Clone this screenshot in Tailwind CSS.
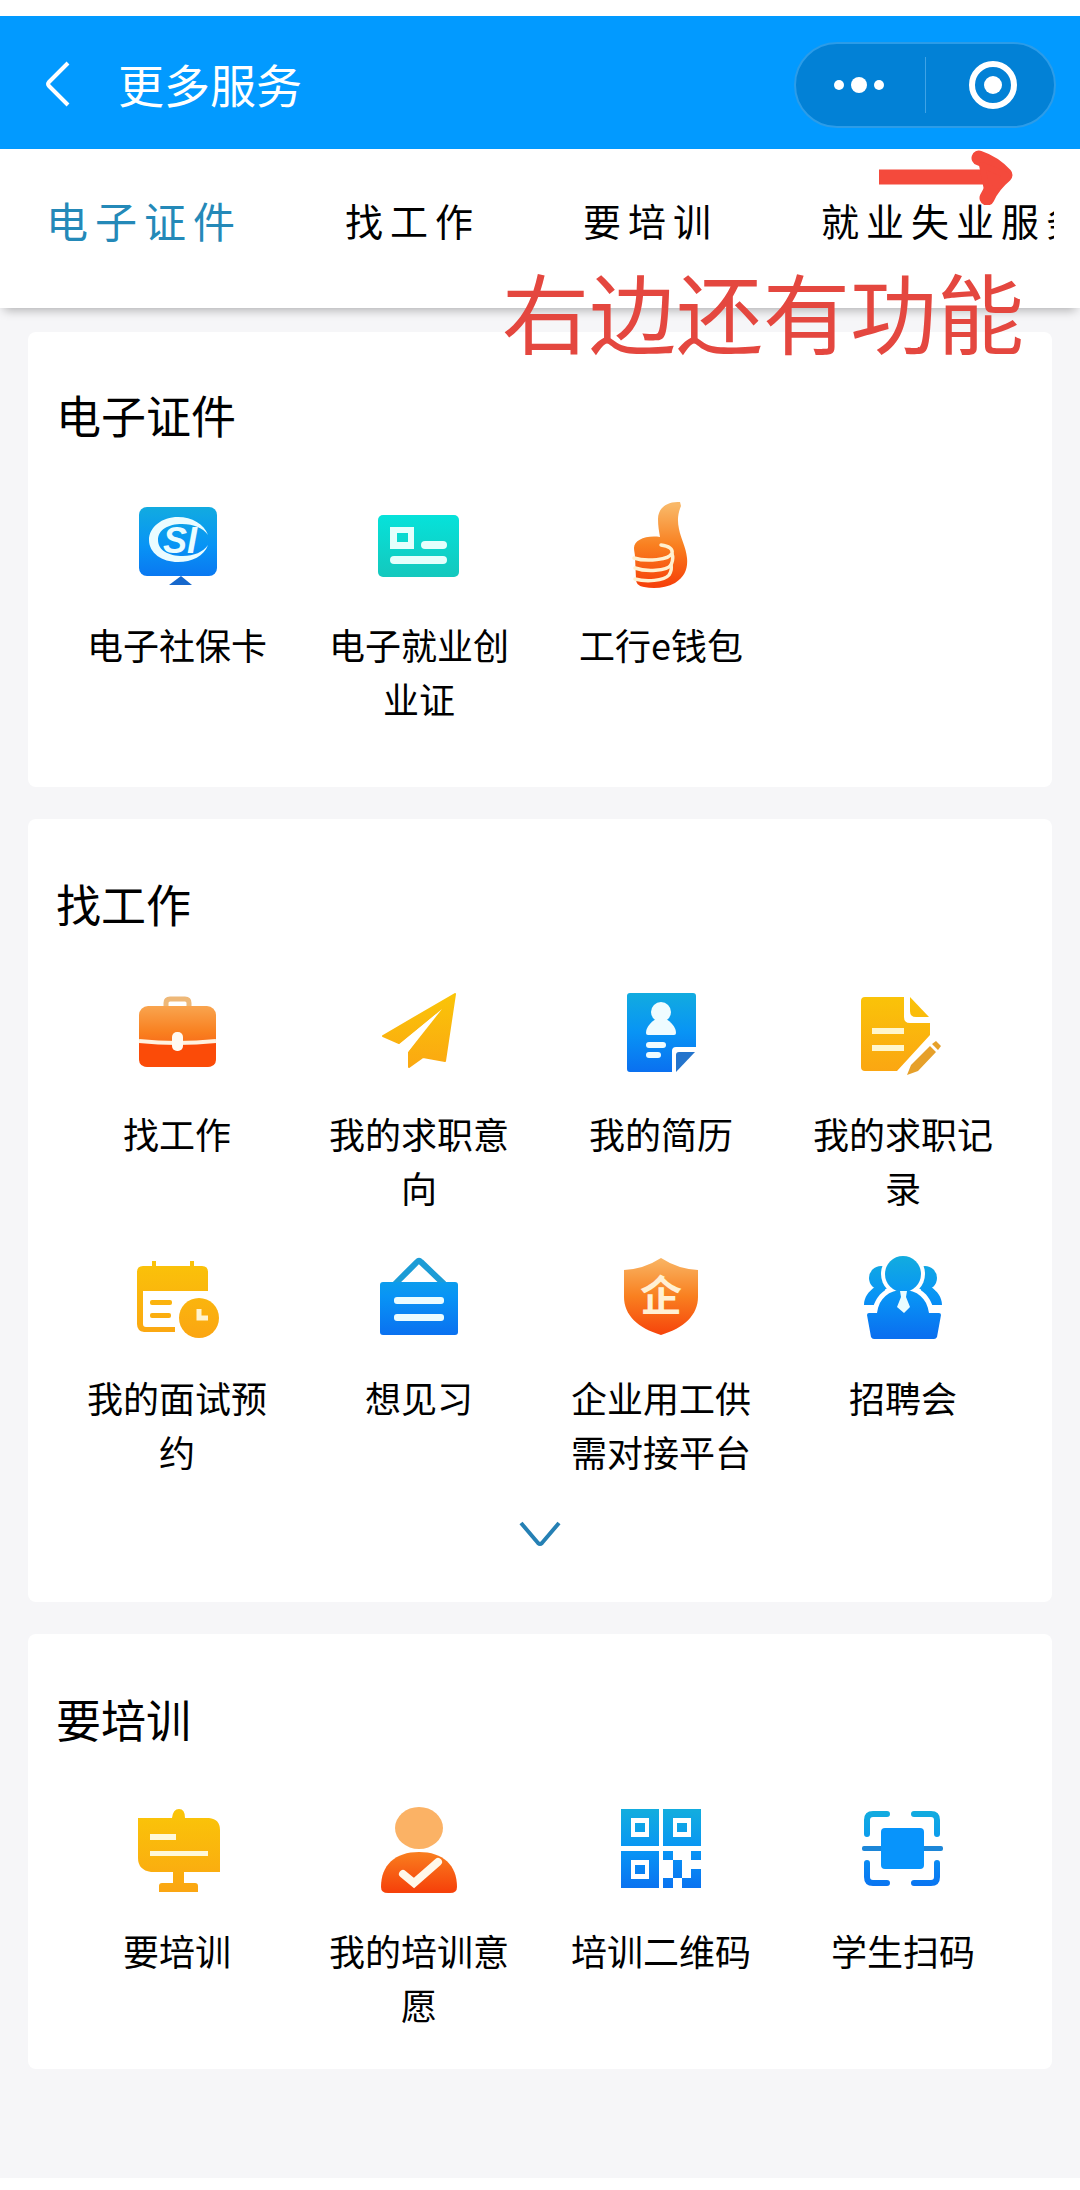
<!DOCTYPE html>
<html lang="zh-CN">
<head>
    <meta charset="UTF-8">
    <meta name="viewport" content="width=device-width, initial-scale=1.0">
    <title>更多服务</title>
    <script src="https://cdn.jsdelivr.net/npm/@tailwindcss/browser@4"></script>
</head>
<body class="bg-white text-black pt-4 font-['Noto_Sans_CJK_SC',sans-serif]">

<!-- Shared icon gradients -->
<svg class="absolute w-0 h-0" aria-hidden="true">
    <defs>
        <linearGradient id="blue" gradientUnits="userSpaceOnUse" x1="0" y1="8" x2="0" y2="88">
            <stop offset="0" stop-color="#12acdf"/><stop offset="0.5" stop-color="#0894f5"/><stop offset="1" stop-color="#0a70f0"/>
        </linearGradient>
        <linearGradient id="orange" gradientUnits="userSpaceOnUse" x1="0" y1="8" x2="0" y2="88">
            <stop offset="0" stop-color="#f9b868"/><stop offset="0.5" stop-color="#f98020"/><stop offset="1" stop-color="#f6420a"/>
        </linearGradient>
        <linearGradient id="yellow" gradientUnits="userSpaceOnUse" x1="0" y1="8" x2="0" y2="88">
            <stop offset="0" stop-color="#fac508"/><stop offset="1" stop-color="#fba612"/>
        </linearGradient>
        <linearGradient id="teal" gradientUnits="userSpaceOnUse" x1="0" y1="18" x2="0" y2="80">
            <stop offset="0" stop-color="#06e2da"/><stop offset="1" stop-color="#14c8bd"/>
        </linearGradient>
    </defs>
</svg>

<!-- Title bar -->
<header class="flex items-center bg-[#029aff] text-white pt-[26px] pb-[21px] pl-10 pr-6">
    <button aria-label="返回" class="w-10 h-14">
        <svg class="w-10 h-14" viewBox="0 0 40 56" fill="none" stroke="currentColor" stroke-width="4"><path d="M28 6 9 25q-2 2 0 4L28 48"/></svg>
    </button>
    <h1 class="ml-[38px] pb-1 text-[46px] leading-[56px]">更多服务</h1>
    <div class="ml-auto flex items-center w-[262px] h-[86px] rounded-full bg-[#0281d6] border-2 border-[#2c9ce8]">
        <button aria-label="更多" class="flex-1 flex justify-center">
            <svg class="w-16 h-10" viewBox="0 0 64 40" fill="currentColor"><circle cx="11" cy="20" r="5"/><circle cx="31" cy="20" r="8"/><circle cx="51" cy="20" r="5"/></svg>
        </button>
        <span class="w-px h-14 bg-[#3fa3e6]"></span>
        <button aria-label="关闭" class="flex-1 flex justify-center">
            <svg class="w-14 h-14" viewBox="0 0 56 56" fill="none"><circle cx="31" cy="28" r="21" stroke="currentColor" stroke-width="6"/><circle cx="31" cy="28" r="9" fill="currentColor"/></svg>
        </button>
    </div>
</header>

<!-- Category tabs -->
<div class="relative z-10 bg-white shadow-[0_6px_10px_-4px_rgba(0,0,0,0.3)]">
    <nav class="flex items-center gap-[103px] h-[159px] pb-[18px] ml-[46px] mr-[26px] overflow-hidden whitespace-nowrap text-[38px] tracking-[7px]">
        <button class="shrink-0 text-[42px] text-[#2489b8]">电子证件</button>
        <button class="shrink-0">找工作</button>
        <button class="shrink-0">要培训</button>
        <button class="shrink-0">就业失业服务</button>
    </nav>

    <!-- Hint: more tabs to the right -->
    <svg class="absolute right-16 top-0 w-[140px] h-14" viewBox="0 0 140 56" fill="none" stroke="#f44a3c" stroke-width="15" stroke-linejoin="round" aria-hidden="true">
        <path d="M3 28H125"/>
        <path d="M103 9Q118 14 129 26Q117 36 111 49" stroke-linecap="round"/>
        <path d="M106 16 130 26 112 46Z" fill="#f44a3c" stroke-width="6"/>
    </svg>
    <p class="absolute right-[56px] top-[117px] text-[87px] leading-[88px] whitespace-nowrap text-[#e4473f]">右边还有功能</p>
</div>

<main class="flex flex-col gap-8 bg-[#f6f6f8] px-7 pt-6 pb-[109px]">

    <!-- 电子证件 -->
    <section class="bg-white rounded-lg px-7 pt-[50px] pb-[62px]">
        <h2 class="text-[45px] leading-[66px]">电子证件</h2>
        <div class="grid grid-cols-4 mt-[49px] text-center text-[36px] leading-[54px]">
            <a href="#" class="flex flex-col items-center gap-6 px-6">
                <svg class="size-24" viewBox="0 0 96 96">
                    <rect x="10" y="10" width="78" height="69" rx="8" fill="url(#blue)"/>
                    <path d="M40 88h23L52 79z" fill="#1668cc"/>
                    <path d="M79 38C75 27 63 20 49 20 33 20 20 30 20 43s13 22 29 22c14 0 26-6 30-17-5 7-14 11-25 11-15 0-25-6-25-16s10-16 24-16c12 0 21 4 26 11z" fill="#eafcff"/>
                    <text x="34" y="56" font-family="Liberation Sans" font-size="36" font-weight="bold" font-style="italic" fill="#eafcff">SI</text>
                </svg>
                <span>电子社保卡</span>
            </a>
            <a href="#" class="flex flex-col items-center gap-6 px-6">
                <svg class="size-24" viewBox="0 0 96 96">
                    <rect x="7" y="18" width="81" height="62" rx="5" fill="url(#teal)"/>
                    <g fill="#e4fffc">
                        <path fill-rule="evenodd" d="M19 30h24v22H19zM26 36v9h11v-9z"/>
                        <rect x="50" y="44" width="26" height="8" rx="4"/>
                        <rect x="19" y="59" width="57" height="8" rx="4"/>
                    </g>
                </svg>
                <span>电子就业创业证</span>
            </a>
            <a href="#" class="flex flex-col items-center gap-6 px-6">
                <svg class="size-24" viewBox="0 0 96 96">
                    <path d="M67 5C54 4 45 11 45 22c0 7 1 12 2 18C33 38 21 43 21 51c0 3 1 6 1 9l1 22c0 4 2 7 8 8 10 2 22 1 31-4 10-6 13-15 12-25-1-11-6-19-8-29-2-9-1-16 2-23z" fill="url(#orange)"/>
                    <g fill="none" stroke="#fff0d0" stroke-width="3.500" stroke-linecap="round">
                        <path d="M48 48c8 1 12 4 11 8-2 7-26 9-38 5"/>
                        <path d="M59 57c2 5 0 8-1 11-4 6-25 7-36 3"/>
                        <path d="M58 68c1 4 0 7-2 10-5 6-23 7-34 4"/>
                    </g>
                </svg>
                <span>工行e钱包</span>
            </a>
        </div>
    </section>

    <!-- 找工作 -->
    <section class="bg-white rounded-lg px-7 pt-[52px] pb-7">
        <h2 class="text-[45px] leading-[66px]">找工作</h2>
        <div class="grid grid-cols-4 gap-y-[34px] mt-[47px] text-center text-[36px] leading-[54px]">
            <a href="#" class="flex flex-col items-center gap-[26px] px-6">
                <svg class="size-24" viewBox="0 0 96 96">
                    <path d="M37 23v-4q0-4 4-4h15q4 0 4 4v4" fill="none" stroke="#eeb878" stroke-width="5"/>
                    <rect x="10" y="22" width="77" height="61" rx="9" fill="url(#orange)"/>
                    <path d="M10 57q38 4 77 0v18q0 8-9 8H19q-9 0-9-8z" fill="#fb4b08"/>
                    <path d="M10 57q38 4 77 0" fill="none" stroke="#fff2e0" stroke-width="4"/>
                    <rect x="43" y="48" width="11" height="19" rx="5" fill="#fffaf2"/>
                </svg>
                <span>找工作</span>
            </a>
            <a href="#" class="flex flex-col items-center gap-[26px] px-6">
                <svg class="size-24" viewBox="0 0 96 96" fill="url(#yellow)" stroke="url(#yellow)" stroke-width="2" stroke-linejoin="round">
                    <path d="M84 10 12 52 28 59 71 24 38 68V83L52 73 74 77Z"/>
                    <path d="M71 25 29 60 37 68Z" fill="#fff" stroke="none"/>
                </svg>
                <span>我的求职意向</span>
            </a>
            <a href="#" class="flex flex-col items-center gap-[26px] px-6">
                <svg class="size-24" viewBox="0 0 96 96">
                    <path d="M17 9H80q3 0 3 3V63H63q-4 0-4 4V88H17q-3 0-3-3V12q0-3 3-3z" fill="url(#blue)"/>
                    <path d="M63 88V71q0-3 3-3H82Z" fill="#2474cc"/>
                    <g fill="#effcff">
                        <circle cx="48" cy="28" r="10"/>
                        <path d="M43 35h10c5 3 10 8 10 14q0 2-2 2H35q-2 0-2-2c0-6 5-11 10-14z"/>
                        <rect x="33" y="58" width="20" height="6" rx="3"/>
                        <rect x="33" y="68" width="15" height="6" rx="3"/>
                    </g>
                </svg>
                <span>我的简历</span>
            </a>
            <a href="#" class="flex flex-col items-center gap-[26px] px-6">
                <svg class="size-24" viewBox="0 0 96 96" fill="url(#yellow)">
                    <path d="M10 13H49V33q0 6 6 6H75V51L42 87H10q-4 0-4-4V17q0-4 4-4z"/>
                    <path d="M55 13 74 33H61q-6 0-6-6z"/>
                    <path d="M17 44H49v6H17zM17 61H49v6H17z" fill="#fff6cc"/>
                    <path d="M75 62 81 68 63 87 52 91 56 81zM77 60 81 57 86 62 83 66z" fill="#e6a02a"/>
                </svg>
                <span>我的求职记录</span>
            </a>
            <a href="#" class="flex flex-col items-center gap-[26px] px-6">
                <svg class="size-24" viewBox="0 0 96 96" fill="url(#yellow)">
                    <path d="M14 18H23V13h4v5H61V13h4v5h8q6 0 6 6V43H14V76q0 3 3 3H46v5H15q-7-1-7-8V24q0-6 6-6z"/>
                    <rect x="21" y="52" width="22" height="5" rx="2"/>
                    <rect x="21" y="65" width="21" height="5" rx="2"/>
                    <circle cx="70" cy="70" r="20"/>
                    <path d="M70 61V70H79" fill="none" stroke="#fff3cf" stroke-width="5"/>
                </svg>
                <span>我的面试预约</span>
            </a>
            <a href="#" class="flex flex-col items-center gap-[26px] px-6">
                <svg class="size-24" viewBox="0 0 96 96">
                    <path d="M24 36 46 14q2-2 4 0L73 36" fill="none" stroke="#1c9cd6" stroke-width="6"/>
                    <rect x="9" y="34" width="78" height="53" rx="3" fill="url(#blue)"/>
                    <rect x="23" y="49" width="50" height="7" rx="3" fill="#eafcff"/>
                    <rect x="23" y="66" width="50" height="7" rx="3" fill="#eafcff"/>
                </svg>
                <span>想见习</span>
            </a>
            <a href="#" class="flex flex-col items-center gap-[26px] px-6">
                <svg class="size-24" viewBox="0 0 96 96">
                    <path d="M48 10q17 11 37 12V49c0 18-14 31-37 38C25 80 11 67 11 49V22q20-1 37-12z" fill="url(#orange)"/>
                    <text x="48" y="63" text-anchor="middle" font-family="Noto Sans CJK SC" font-size="42" font-weight="bold" fill="#fff0d4">企</text>
                </svg>
                <span>企业用工供需对接平台</span>
            </a>
            <a href="#" class="flex flex-col items-center gap-[26px] px-6">
                <svg class="size-24" viewBox="0 0 96 96" fill="url(#blue)">
                    <circle cx="26" cy="30" r="12"/>
                    <circle cx="70" cy="30" r="12"/>
                    <path d="M20 39C14 43 9 49 9 57H30V39zM76 39c6 4 11 10 11 18H66V39z"/>
                    <path d="M17 65C19 48 31 37 48 37S77 48 79 65z" fill="#fff"/>
                    <circle cx="48" cy="26" r="22" fill="#fff"/>
                    <path d="M22 65C24 50 34 42 48 42S72 50 74 65h10q2 0 2 2l-4 22q-1 2-3 2H19q-2 0-3-2l-4-22q0-2 2-2z"/>
                    <circle cx="48" cy="26" r="18"/>
                    <path d="M45 43h7l-1 6 4 10-6 6-7-6 4-10z" fill="#eafcff"/>
                </svg>
                <span>招聘会</span>
            </a>
        </div>
        <button aria-label="展开更多" class="flex items-center justify-center w-full h-20 mt-4">
            <svg class="w-12 h-8" viewBox="0 0 48 32" fill="none" stroke="#2580b4" stroke-width="4"><path d="M5 5 22 25q2 2 4 0L43 5"/></svg>
        </button>
    </section>

    <!-- 要培训 -->
    <section class="bg-white rounded-lg px-7 pt-[52px] pb-[38px]">
        <h2 class="text-[45px] leading-[66px]">要培训</h2>
        <div class="grid grid-cols-4 mt-[51px] text-center text-[36px] leading-[54px]">
            <a href="#" class="flex flex-col items-center gap-6 px-6">
                <svg class="size-24" viewBox="0 0 96 96" fill="url(#yellow)">
                    <path d="M9 15H43Q44 6 50 6T56 15H80Q91 16 91 27V69H55V80H66q3 0 3 3v6H30V83q0-3 3-3H44V69H22Q9 67 9 55z"/>
                    <path d="M21 31H47v6H21zM21 48H79v5H21z" fill="#fff8d8"/>
                </svg>
                <span>要培训</span>
            </a>
            <a href="#" class="flex flex-col items-center gap-6 px-6">
                <svg class="size-24" viewBox="0 0 96 96">
                    <ellipse cx="48" cy="25" rx="24" ry="21" fill="#fbb265"/>
                    <path d="M10 84C10 62 24 49 48 49S86 62 86 84Q86 90 79 90H17Q10 90 10 84z" fill="url(#orange)"/>
                    <path d="M32 71 43 80 67 59" fill="none" stroke="#fff8ea" stroke-width="8" stroke-linecap="round"/>
                </svg>
                <span>我的培训意愿</span>
            </a>
            <a href="#" class="flex flex-col items-center gap-6 px-6">
                <svg class="size-24" viewBox="0 0 96 96" fill="url(#blue)" fill-rule="evenodd">
                    <path d="M8 6H46V43H8zM18 15V34H36V15zM22 20H32V29H22z"/>
                    <path d="M50 6H88V43H50zM60 15V34H78V15zM64 20H74V29H64z"/>
                    <path d="M8 48H46V85H8zM18 57V76H36V57zM22 62H32V71H22z"/>
                    <path d="M50 48h10v9h9v18H60v10H50V75h10V57H50zM78 48h10v9H78zM78 66h10v19H69V75h9z"/>
                </svg>
                <span>培训二维码</span>
            </a>
            <a href="#" class="flex flex-col items-center gap-6 px-6">
                <svg class="size-24" viewBox="0 0 96 96" fill="none" stroke="url(#blue)" stroke-width="6" stroke-linecap="round">
                    <path d="M12 31V17q0-6 6-6H32M59 11H76q6 0 6 6V31M12 60V74q0 6 6 6H32M59 80H76q6 0 6-6V60"/>
                    <rect x="7" y="43" width="81" height="5" rx="2" fill="#1c86d8" stroke="none"/>
                    <rect x="26" y="25" width="43" height="41" rx="4" fill="#0894fb" stroke="none"/>
                </svg>
                <span>学生扫码</span>
            </a>
        </div>
    </section>
</main>

</body>
</html>
